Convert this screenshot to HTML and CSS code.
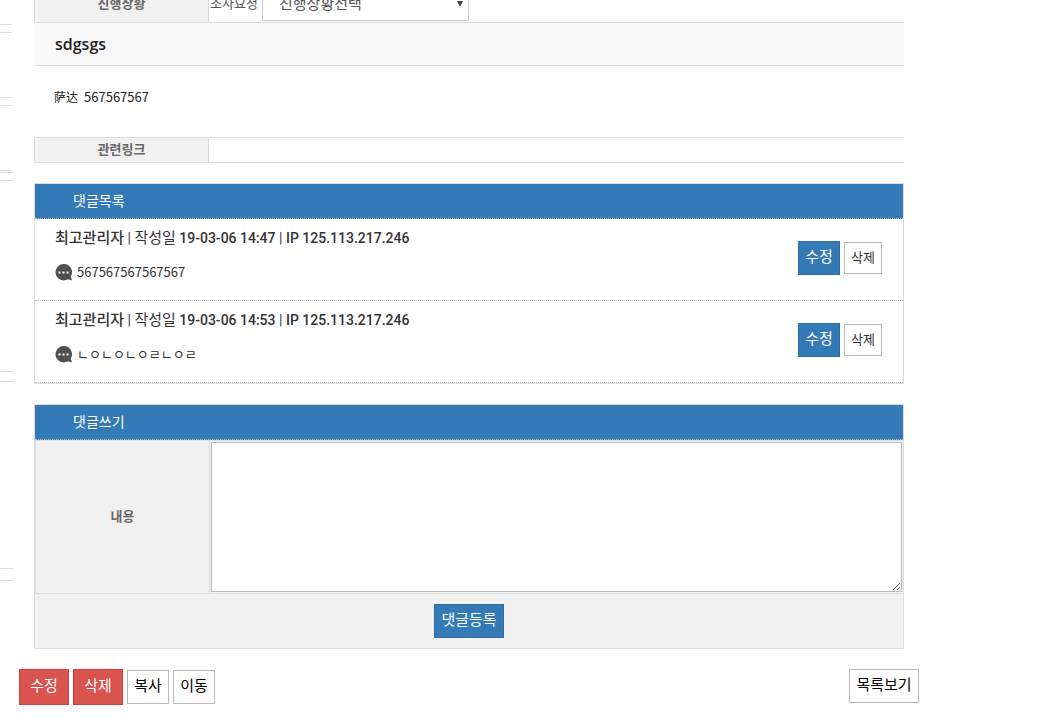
FILE: index.html
```html
<!DOCTYPE html>
<html lang="ko">
<head>
<meta charset="utf-8">
<title>sdgsgs</title>
<link rel="stylesheet" href="styles.css">
</head>
<body>
<div class="page">
  <aside class="side">
    <div class="side-box side-first"></div>
    <div class="side-box side-small"></div>
    <div class="side-box side-small"></div>
    <div class="side-box side-line"></div>
    <div class="side-box side-tall"></div>
    <div class="side-box side-mid"></div>
    <div class="side-box side-last"></div>
  </aside>
  <main class="main">
    <article class="view">
      <div class="info-row status-row">
        <label class="info-name" for="status">진행상황</label>
        <div class="info-value">
          <span class="status-text">조사요청</span>
          <span class="select-wrap">
            <select id="status" class="select"><option>진행상황선택</option></select>
          </span>
        </div>
      </div>
      <h1 class="title">sdgsgs</h1>
      <div class="content"><span lang="zh" class="zh">萨达</span><span>567567567</span></div>
      <div class="info-row link-row">
        <div class="info-name">관련링크</div>
        <div class="info-value"></div>
      </div>

      <section class="panel">
        <h2 class="panel-head">댓글목록</h2>
        <div class="comment">
          <div class="comment-body">
            <div class="meta"><strong class="writer">최고관리자</strong> | <span class="label">작성일</span> <b class="num">19-03-06 14:47</b> | <b class="num">IP 125.113.217.246</b></div>
            <div class="text"><svg class="bubble" viewBox="0 0 17 17"><path fill="#505050" d="M8.500 0a8.200 8.200 0 1 0 4.500 15.200L17 16.400l-1.200-4A8.200 8.200 0 0 0 8.500 0z"/><path fill="#fff" d="M3.500 7.500h2v2h-2zM7.500 7.500h2v2h-2zM11.500 7.500h2v2h-2z"/></svg>567567567567567</div>
          </div>
          <div class="actions"><button type="button" class="btn btn-blue">수정</button><button type="button" class="btn btn-small">삭제</button></div>
        </div>
        <div class="comment">
          <div class="comment-body">
            <div class="meta"><strong class="writer">최고관리자</strong> | <span class="label">작성일</span> <b class="num">19-03-06 14:53</b> | <b class="num">IP 125.113.217.246</b></div>
            <div class="text"><svg class="bubble" viewBox="0 0 17 17"><path fill="#505050" d="M8.500 0a8.200 8.200 0 1 0 4.500 15.200L17 16.400l-1.200-4A8.200 8.200 0 0 0 8.500 0z"/><path fill="#fff" d="M3.500 7.500h2v2h-2zM7.500 7.500h2v2h-2zM11.500 7.500h2v2h-2z"/></svg>ㄴㅇㄴㅇㄴㅇㄹㄴㅇㄹ</div>
          </div>
          <div class="actions"><button type="button" class="btn btn-blue">수정</button><button type="button" class="btn btn-small">삭제</button></div>
        </div>
      </section>

      <form class="panel">
        <h2 class="panel-head">댓글쓰기</h2>
        <div class="write-row">
          <label class="write-name" for="reply">내용</label>
          <div class="write-field"><textarea id="reply" class="textarea"></textarea></div>
        </div>
        <div class="write-foot"><button type="button" class="btn btn-blue">댓글등록</button></div>
      </form>
    </article>
    <div class="toolbar">
      <button type="button" class="btn btn-red">수정</button>
      <button type="button" class="btn btn-red">삭제</button>
      <button type="button" class="btn">복사</button>
      <button type="button" class="btn">이동</button>
      <button type="button" class="btn btn-list">목록보기</button>
    </div>
  </main>
</div>
</body>
</html>
```
FILE: styles.css
```css
* { box-sizing: border-box; }

body {
  margin: 0;
  overflow: hidden;
  background: #fff;
  color: #333;
  font: 13px/20px "Noto Sans CJK KR", sans-serif;
}

h1, h2 { margin: 0; }

/* The view is scrolled partway into its first row. */
.page {
  display: flex;
  gap: 5px;
  margin-top: -16px;
}

/* Edge of the side column */
.side {
  flex: none;
  width: 14px;
  display: flex;
  flex-direction: column;
}
.side-box {
  border: solid #ddd;
  border-width: 1px 0;
}
.side-first { height: 41px; width: 12px; }
.side-small { height: 66px; width: 12px; margin-top: 7px; }
.side-line { height: 1px; margin-top: 1px; border-bottom: 0; }
.side-tall { height: 192px; margin-top: 7px; }
.side-mid { height: 188px; margin-top: 9px; }
.side-last { height: 160px; margin-top: 11px; }

.main {
  flex: 1;
  min-width: 0;
  margin-right: 134px;
}
.view { padding: 0 15px; }

/* Name and value rows */
.info-row {
  display: flex;
  border: solid #ddd;
  border-width: 1px 0 1px 1px;
}
.info-name {
  display: flex;
  align-items: center;
  justify-content: center;
  width: 174px;
  padding-bottom: 2px;
  border-right: 1px solid #ddd;
  background: #f1f1f1;
  color: #666;
  font-weight: bold;
}
.info-value {
  flex: 1;
  display: flex;
  align-items: center;
  gap: 4px;
  padding: 0 1px;
}
.status-row { height: 39px; }
.link-row { height: 26px; }
.status-text {
  width: 48px;
  padding-bottom: 2px;
  white-space: nowrap;
  color: #555;
}

.select-wrap { position: relative; display: flex; }
.select-wrap::after {
  content: "";
  position: absolute;
  top: 14px;
  right: 6px;
  border: solid transparent;
  border-width: 6px 3px 0;
  border-top-color: #444;
}
.select {
  appearance: none;
  width: 207px;
  height: 34px;
  padding: 0 16px 2px;
  border: 1px solid #ccc;
  border-radius: 0;
  background: #fff;
  color: #555;
  font: 15px/20px "Noto Sans CJK KR", sans-serif;
}

.title {
  margin-left: 1px;
  padding: 11px 20px;
  border-bottom: 1px solid #ddd;
  background: #f9f9f9;
  color: #222;
  font: 600 16px/20px "Open Sans", "Noto Sans CJK KR", sans-serif;
}
.content {
  display: flex;
  gap: 6px;
  padding: 21px 20px 30px;
  color: #222;
}
.zh { font: 12px/20px "Noto Sans CJK SC", sans-serif; }

/* Comment panels */
.panel {
  margin-top: 20px;
  border: 1px solid #ddd;
}
.panel-head {
  height: 35px;
  padding: 6px 38px;
  border-bottom: 1px dotted #bbb;
  background: #337ab7;
  color: #fff;
  font-size: 14px;
  font-weight: normal;
  line-height: 20px;
}
.comment {
  display: flex;
  justify-content: space-between;
  height: 82px;
  padding: 9px 21px 0 20px;
  border-bottom: 1px dotted #bbb;
}
.meta { font: 14px/20px Roboto, "Noto Sans CJK KR", sans-serif; }
.writer { font-size: 15px; font-weight: 500; line-height: 20px; }
.label { font-size: 15px; line-height: 20px; }
.num { font-weight: 500; }
.text {
  display: flex;
  align-items: center;
  gap: 5px;
  margin-top: 14px;
}
.bubble { width: 17px; height: 17px; }
.actions {
  display: flex;
  align-items: center;
  align-self: flex-start;
  gap: 4px;
  margin-top: 13px;
}

.write-row {
  display: flex;
  border: solid #ddd;
  border-width: 1px 0 1px 1px;
  background: #f1f1f1;
}
.write-name {
  display: flex;
  align-items: center;
  justify-content: center;
  width: 174px;
  padding-bottom: 2px;
  border-right: 1px solid #ddd;
  color: #666;
  font-weight: bold;
}
.write-field { flex: 1; padding: 1px; }
.textarea {
  display: block;
  width: 100%;
  height: 150px;
  border: 1px solid #bbb;
  background: #fff;
  font: inherit;
  resize: vertical;
}
.write-foot {
  display: flex;
  justify-content: center;
  padding: 10px 0;
  background: #f1f1f1;
}

/* Buttons */
.btn {
  min-width: 42px;
  height: 34px;
  padding: 0 6px 4px;
  border: 1px solid #bbb;
  border-radius: 0;
  background: #fff;
  color: #000;
  font: 15px/20px "Noto Sans CJK KR", sans-serif;
}
.btn-blue {
  border-color: #2e6da4;
  background: #337ab7;
  color: #fff;
}
.btn-red {
  min-width: 50px;
  height: 36px;
  border-color: #d43f3a;
  background: #d9534f;
  color: #fff;
}
.btn-small {
  min-width: 38px;
  height: 32px;
  padding: 0 6px 2px;
  color: #333;
  font-size: 13px;
}
.toolbar {
  display: flex;
  align-items: center;
  gap: 4px;
  margin-top: 20px;
}
.btn-list {
  min-width: 70px;
  margin-left: auto;
  align-self: flex-start;
}
```
